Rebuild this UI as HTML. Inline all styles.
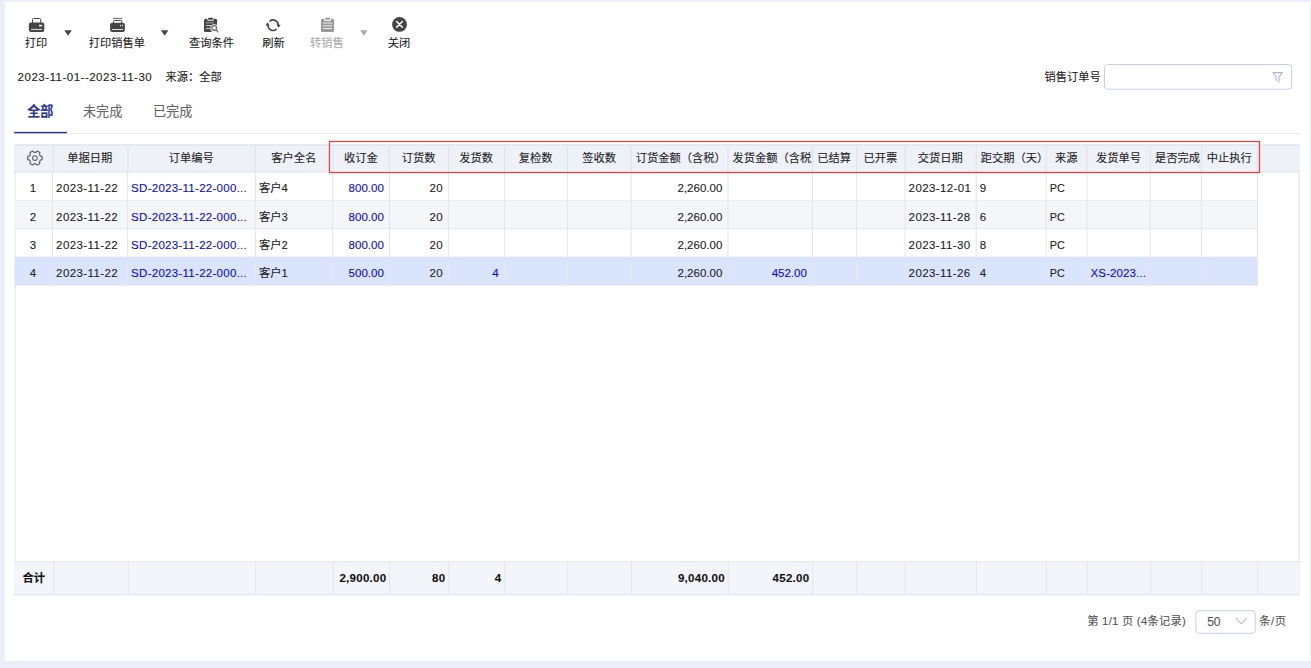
<!DOCTYPE html>
<html lang="zh-CN"><head><meta charset="utf-8"><title>销售订单执行情况</title>
<style>
html,body{margin:0;padding:0;}
body{width:1311px;height:668px;overflow:hidden;background:#eceef8;position:relative;font-family:"Liberation Sans","Noto Sans CJK SC",sans-serif;font-size:11.25px;color:#222;-webkit-text-stroke:0.1px currentColor;}
.panel{position:absolute;left:5px;top:2px;width:1304.5px;height:659px;background:#fff;}
.a{position:absolute;white-space:nowrap;line-height:14px;}
.tb{position:absolute;top:35.5px;height:14px;line-height:14px;text-align:center;white-space:nowrap;color:#222;transform:translateX(-50%);}
.tb.dis{color:#aaa;}
.ico{position:absolute;overflow:visible;}
.tri{position:absolute;top:29.9px;width:7.2px;height:5.8px;}
.tab{position:absolute;top:102.9px;height:18px;line-height:18px;font-size:13.1px;color:#666;white-space:nowrap;}
.tab.on{color:#2a3990;font-weight:bold;}
.cell{position:absolute;white-space:nowrap;overflow:hidden;box-sizing:border-box;}
.hc{text-align:center;padding:0 4.6px;color:#222;}
.hc.ov{text-align:left;}
.bc{padding:0 3.6px;}
.bc.r{text-align:right;padding-right:5.2px;}
.bc.c{text-align:center;}
.bc.l{text-align:left;}
.lat{font-size:11.5px;letter-spacing:0.28px;}
.blue{color:#0808f2;}
.fc{font-weight:bold;text-align:right;padding:0 3.4px;color:#111;}
.vl{position:absolute;width:1px;background:#e6e6e8;}
</style></head><body>

<svg style="position:absolute;left:0;top:0" width="1311" height="668" viewBox="0 0 1311 668">
<rect x="4.8" y="1.9" width="1305.4" height="659.1" fill="#fff"/>
<rect x="14.2" y="133.05" width="1285.5" height="0.9" fill="#e4e8f1"/>
<rect x="14.2" y="131.85" width="52.8" height="1.45" fill="#2a3990"/>
<rect x="14.4" y="144.3" width="1.3" height="450.90000000000003" fill="#e6eaf3"/>
<rect x="1298.5" y="144.3" width="1.2" height="450.90000000000003" fill="#e1e6f0"/>
<rect x="14.4" y="144.3" width="1285.3" height="28.19999999999999" fill="#eef1f8"/>
<rect x="14.4" y="144.3" width="1285.3" height="1.7" fill="#e2e7f0"/>
<rect x="14.4" y="171.2" width="1285.3" height="1.3" fill="#e3e8f1"/>
<rect x="15.700000000000001" y="200.10" width="1242.30" height="1" fill="#e9e9ea"/>
<rect x="14.8" y="200.70" width="1242.70" height="28.2" fill="#f5f6fa"/>
<rect x="15.700000000000001" y="228.30" width="1242.30" height="1" fill="#e9e9ea"/>
<rect x="15.700000000000001" y="256.50" width="1242.30" height="1" fill="#e9e9ea"/>
<rect x="14.8" y="257.10" width="1242.70" height="28.2" fill="#dae4fd"/>
<rect x="15.700000000000001" y="284.70" width="1242.30" height="1" fill="#e9e9ea"/>
<rect x="14.4" y="561.2" width="1285.3" height="34.0" fill="#f4f5fa"/>
<rect x="14.4" y="561.2" width="1285.3" height="1.1" fill="#e1e6f0"/>
<rect x="14.4" y="593.8000000000001" width="1285.3" height="1.4" fill="#e1e6f0"/>
<rect x="52.80" y="146.0" width="1.2" height="26.50" fill="#dfe5ee"/>
<rect x="51.95" y="172.5" width="1.1" height="112.80" fill="#e6e6e7"/>
<rect x="53.10" y="562.3000000000001" width="1.1" height="31.50" fill="#e4e6ec"/>
<rect x="127.40" y="146.0" width="1.2" height="26.50" fill="#dfe5ee"/>
<rect x="126.95" y="172.5" width="1.1" height="112.80" fill="#e6e6e7"/>
<rect x="127.70" y="562.3000000000001" width="1.1" height="31.50" fill="#e4e6ec"/>
<rect x="254.80" y="146.0" width="1.2" height="26.50" fill="#dfe5ee"/>
<rect x="254.85" y="172.5" width="1.1" height="112.80" fill="#e6e6e7"/>
<rect x="255.10" y="562.3000000000001" width="1.1" height="31.50" fill="#e4e6ec"/>
<rect x="332.60" y="146.0" width="1.2" height="26.50" fill="#dfe5ee"/>
<rect x="332.05" y="172.5" width="1.1" height="112.80" fill="#e6e6e7"/>
<rect x="332.90" y="562.3000000000001" width="1.1" height="31.50" fill="#e4e6ec"/>
<rect x="388.90" y="146.0" width="1.2" height="26.50" fill="#dfe5ee"/>
<rect x="388.95" y="172.5" width="1.1" height="112.80" fill="#e6e6e7"/>
<rect x="389.20" y="562.3000000000001" width="1.1" height="31.50" fill="#e4e6ec"/>
<rect x="447.90" y="146.0" width="1.2" height="26.50" fill="#dfe5ee"/>
<rect x="447.95" y="172.5" width="1.1" height="112.80" fill="#e6e6e7"/>
<rect x="448.20" y="562.3000000000001" width="1.1" height="31.50" fill="#e4e6ec"/>
<rect x="503.90" y="146.0" width="1.2" height="26.50" fill="#dfe5ee"/>
<rect x="503.95" y="172.5" width="1.1" height="112.80" fill="#e6e6e7"/>
<rect x="504.20" y="562.3000000000001" width="1.1" height="31.50" fill="#e4e6ec"/>
<rect x="566.90" y="146.0" width="1.2" height="26.50" fill="#dfe5ee"/>
<rect x="566.95" y="172.5" width="1.1" height="112.80" fill="#e6e6e7"/>
<rect x="567.20" y="562.3000000000001" width="1.1" height="31.50" fill="#e4e6ec"/>
<rect x="630.60" y="146.0" width="1.2" height="26.50" fill="#dfe5ee"/>
<rect x="630.65" y="172.5" width="1.1" height="112.80" fill="#e6e6e7"/>
<rect x="630.90" y="562.3000000000001" width="1.1" height="31.50" fill="#e4e6ec"/>
<rect x="727.40" y="146.0" width="1.2" height="26.50" fill="#dfe5ee"/>
<rect x="727.45" y="172.5" width="1.1" height="112.80" fill="#e6e6e7"/>
<rect x="727.70" y="562.3000000000001" width="1.1" height="31.50" fill="#e4e6ec"/>
<rect x="811.90" y="146.0" width="1.2" height="26.50" fill="#dfe5ee"/>
<rect x="811.95" y="172.5" width="1.1" height="112.80" fill="#e6e6e7"/>
<rect x="812.20" y="562.3000000000001" width="1.1" height="31.50" fill="#e4e6ec"/>
<rect x="855.90" y="146.0" width="1.2" height="26.50" fill="#dfe5ee"/>
<rect x="855.95" y="172.5" width="1.1" height="112.80" fill="#e6e6e7"/>
<rect x="856.20" y="562.3000000000001" width="1.1" height="31.50" fill="#e4e6ec"/>
<rect x="904.40" y="146.0" width="1.2" height="26.50" fill="#dfe5ee"/>
<rect x="904.45" y="172.5" width="1.1" height="112.80" fill="#e6e6e7"/>
<rect x="904.70" y="562.3000000000001" width="1.1" height="31.50" fill="#e4e6ec"/>
<rect x="975.60" y="146.0" width="1.2" height="26.50" fill="#dfe5ee"/>
<rect x="975.65" y="172.5" width="1.1" height="112.80" fill="#e6e6e7"/>
<rect x="975.90" y="562.3000000000001" width="1.1" height="31.50" fill="#e4e6ec"/>
<rect x="1045.60" y="146.0" width="1.2" height="26.50" fill="#dfe5ee"/>
<rect x="1045.65" y="172.5" width="1.1" height="112.80" fill="#e6e6e7"/>
<rect x="1045.90" y="562.3000000000001" width="1.1" height="31.50" fill="#e4e6ec"/>
<rect x="1086.40" y="146.0" width="1.2" height="26.50" fill="#dfe5ee"/>
<rect x="1086.45" y="172.5" width="1.1" height="112.80" fill="#e6e6e7"/>
<rect x="1086.70" y="562.3000000000001" width="1.1" height="31.50" fill="#e4e6ec"/>
<rect x="1149.70" y="146.0" width="1.2" height="26.50" fill="#dfe5ee"/>
<rect x="1149.75" y="172.5" width="1.1" height="112.80" fill="#e6e6e7"/>
<rect x="1150.00" y="562.3000000000001" width="1.1" height="31.50" fill="#e4e6ec"/>
<rect x="1200.90" y="146.0" width="1.2" height="26.50" fill="#dfe5ee"/>
<rect x="1200.95" y="172.5" width="1.1" height="112.80" fill="#e6e6e7"/>
<rect x="1201.20" y="562.3000000000001" width="1.1" height="31.50" fill="#e4e6ec"/>
<rect x="1256.90" y="146.0" width="1.2" height="26.50" fill="#dfe5ee"/>
<rect x="1256.95" y="172.5" width="1.1" height="112.80" fill="#e6e6e7"/>
<rect x="1257.20" y="562.3000000000001" width="1.1" height="31.50" fill="#e4e6ec"/>
<rect x="329.5" y="141.5" width="930" height="31" fill="none" stroke="#ff3434" stroke-width="1.2"/>
<rect x="1104.5" y="64.5" width="187.1" height="24.7" rx="3.2" fill="#fff" stroke="#c8cfe4" stroke-width="1"/>
<rect x="1195.9" y="610.7" width="59.3" height="22.6" rx="3.2" fill="#fff" stroke="#c8cfe4" stroke-width="1"/>
<g transform="translate(64.3,29.95)"><path d="M0 0.3 H7.5 L3.75 5.8z" fill="#444"/></g>
<g transform="translate(160.9,29.95)"><path d="M0 0.3 H7.5 L3.75 5.8z" fill="#444"/></g>
<g transform="translate(360.1,29.95)"><path d="M0 0.3 H7.5 L3.75 5.8z" fill="#aaa"/></g>
<g transform="translate(28.9,18.0)"><rect x="3.6" y="0.5" width="8.2" height="6" rx="1" fill="#fff" stroke="#444" stroke-width="1"/><rect x="0" y="4.6" width="15.4" height="9.4" rx="2" fill="#444"/><rect x="10.1" y="6.7" width="3.2" height="1.8" rx="0.4" fill="#f2f2f2"/><rect x="2.1" y="10.9" width="11.2" height="0.9" fill="#f2f2f2"/></g>
<g transform="translate(110.1,17.8)"><rect x="2.8" y="0.1" width="9.2" height="0.9" fill="#555"/><rect x="3.4" y="2.7" width="8.2" height="5" rx="0.8" fill="#fff" stroke="#444" stroke-width="1"/><rect x="0" y="5" width="14.8" height="9.2" rx="2" fill="#444"/><rect x="9.9" y="6.7" width="1.1" height="1.9" rx="0.4" fill="#ccc"/><rect x="11.9" y="6.7" width="1.1" height="1.9" rx="0.4" fill="#ccc"/><rect x="1.8" y="11.3" width="11.2" height="0.9" fill="#f2f2f2"/></g>
<g transform="translate(204.0,17.8)"><rect x="0" y="0.95" width="13.1" height="13.25" rx="1.6" fill="#444"/><path d="M3.3 0.4 h6.6 v1.1 a1.5 1.5 0 0 1 -1.5 1.5 h-3.6 a1.5 1.5 0 0 1 -1.5 -1.5z" fill="#fff"/><rect x="4" y="0" width="5.3" height="1.9" rx="0.9" fill="#444"/><rect x="1.9" y="4.6" width="8" height="0.9" fill="#b5b5b5"/><rect x="1.9" y="7.3" width="5.4" height="0.9" fill="#e0e0e0"/><rect x="1.9" y="10.1" width="4.4" height="0.9" fill="#e0e0e0"/><circle cx="10.3" cy="10.4" r="3.9" fill="#fff"/><path d="M9 9 L14.4 14.4 L8 14.4z" fill="#fff"/><rect x="10" y="10" width="4.4" height="4.4" fill="#fff"/><circle cx="10.2" cy="10.3" r="2.4" fill="#fff" stroke="#6e6e6e" stroke-width="1.3"/><path d="M12 12.1 L13.9 13.9" stroke="#6e6e6e" stroke-width="1.3" stroke-linecap="round"/></g>
<g transform="translate(265.0,17.0)"><g fill="none" stroke="#444" stroke-width="1.6" stroke-linecap="round"><path d="M5.0 4.0 A5.15 5.15 0 0 1 13.25 7.9"/><path d="M11.2 12.4 A5.15 5.15 0 0 1 2.95 8.5"/></g><path d="M11.3 7.5 L15.7 7.8 L13.6 10.8z" fill="#444"/><path d="M0.5 8.6 L4.7 8.4 L2.5 5.2z" fill="#444"/></g>
<g transform="translate(321.0,17.8)"><rect x="0" y="0.95" width="13.1" height="13.25" rx="1.6" fill="#999"/><path d="M3 0.4 h7.1 v1.2 a1.6 1.6 0 0 1 -1.6 1.6 h-3.9 a1.6 1.6 0 0 1 -1.6 -1.6z" fill="#fff"/><rect x="3.9" y="0" width="5.3" height="1.9" rx="0.9" fill="#999"/><rect x="1.9" y="4.7" width="9.4" height="1.1" fill="#e6e6e6"/><rect x="1.9" y="7.5" width="9.4" height="1.1" fill="#e6e6e6"/><rect x="1.9" y="10.2" width="9.4" height="1.1" fill="#e6e6e6"/></g>
<g transform="translate(392.0,16.9)"><circle cx="7.5" cy="7.5" r="7.4" fill="#444"/><path d="M4.6 4.6 L10.4 10.4 M10.4 4.6 L4.6 10.4" stroke="#fff" stroke-width="1.5" stroke-linecap="round"/></g>
<g transform="translate(1271.0,71.0)"><path d="M2 1.6 H11.2 M2.2 2 L5.2 6.2 V9.8 M11 2 L7.9 6.2 V11.6" fill="none" stroke="#a9b3cf" stroke-width="1.1" stroke-linecap="round" stroke-linejoin="round"/></g>
<g transform="translate(34.93,158.05)"><path d="M7.25 0.00 L7.25 0.13 L7.25 0.25 L7.24 0.38 L7.23 0.51 L7.22 0.63 L7.21 0.76 L7.20 0.88 L7.18 1.01 L7.16 1.13 L7.14 1.26 L7.12 1.38 L7.09 1.51 L7.02 1.62 L6.80 1.69 L6.58 1.76 L6.35 1.82 L6.14 1.88 L5.92 1.92 L5.71 1.97 L5.51 2.01 L5.41 2.08 L5.38 2.17 L5.34 2.27 L5.30 2.36 L5.26 2.45 L5.21 2.54 L5.17 2.63 L5.12 2.72 L5.07 2.81 L5.02 2.90 L4.97 2.99 L4.92 3.07 L4.86 3.16 L4.81 3.24 L4.75 3.33 L4.69 3.41 L4.63 3.49 L4.57 3.57 L4.51 3.65 L4.49 3.77 L4.56 3.96 L4.63 4.17 L4.69 4.38 L4.76 4.59 L4.81 4.81 L4.87 5.04 L4.91 5.27 L4.85 5.39 L4.76 5.47 L4.66 5.55 L4.56 5.63 L4.46 5.71 L4.36 5.79 L4.26 5.87 L4.16 5.94 L4.05 6.01 L3.95 6.08 L3.84 6.15 L3.73 6.21 L3.63 6.28 L3.51 6.34 L3.40 6.40 L3.29 6.46 L3.18 6.52 L3.06 6.57 L2.95 6.62 L2.83 6.67 L2.72 6.72 L2.60 6.77 L2.48 6.81 L2.36 6.86 L2.24 6.90 L2.10 6.89 L1.93 6.73 L1.76 6.58 L1.60 6.41 L1.44 6.25 L1.29 6.09 L1.15 5.93 L1.02 5.78 L0.91 5.73 L0.81 5.74 L0.71 5.76 L0.61 5.77 L0.51 5.78 L0.40 5.79 L0.30 5.79 L0.20 5.80 L0.10 5.80 L0.00 5.80 L-0.10 5.80 L-0.20 5.80 L-0.30 5.79 L-0.40 5.79 L-0.51 5.78 L-0.61 5.77 L-0.71 5.76 L-0.81 5.74 L-0.91 5.73 L-1.02 5.78 L-1.15 5.93 L-1.29 6.09 L-1.44 6.25 L-1.60 6.41 L-1.76 6.58 L-1.93 6.73 L-2.10 6.89 L-2.24 6.90 L-2.36 6.86 L-2.48 6.81 L-2.60 6.77 L-2.72 6.72 L-2.83 6.67 L-2.95 6.62 L-3.06 6.57 L-3.18 6.52 L-3.29 6.46 L-3.40 6.40 L-3.51 6.34 L-3.62 6.28 L-3.73 6.21 L-3.84 6.15 L-3.95 6.08 L-4.05 6.01 L-4.16 5.94 L-4.26 5.87 L-4.36 5.79 L-4.46 5.71 L-4.56 5.63 L-4.66 5.55 L-4.76 5.47 L-4.85 5.39 L-4.91 5.27 L-4.87 5.04 L-4.81 4.81 L-4.76 4.59 L-4.69 4.38 L-4.63 4.17 L-4.56 3.96 L-4.49 3.77 L-4.51 3.65 L-4.57 3.57 L-4.63 3.49 L-4.69 3.41 L-4.75 3.33 L-4.81 3.24 L-4.86 3.16 L-4.92 3.07 L-4.97 2.99 L-5.02 2.90 L-5.07 2.81 L-5.12 2.72 L-5.17 2.63 L-5.21 2.54 L-5.26 2.45 L-5.30 2.36 L-5.34 2.27 L-5.38 2.17 L-5.41 2.08 L-5.51 2.01 L-5.71 1.97 L-5.92 1.92 L-6.14 1.88 L-6.35 1.82 L-6.58 1.76 L-6.80 1.69 L-7.02 1.62 L-7.09 1.51 L-7.12 1.38 L-7.14 1.26 L-7.16 1.13 L-7.18 1.01 L-7.20 0.88 L-7.21 0.76 L-7.22 0.63 L-7.23 0.51 L-7.24 0.38 L-7.25 0.25 L-7.25 0.13 L-7.25 0.00 L-7.25 -0.13 L-7.25 -0.25 L-7.24 -0.38 L-7.23 -0.51 L-7.22 -0.63 L-7.21 -0.76 L-7.20 -0.88 L-7.18 -1.01 L-7.16 -1.13 L-7.14 -1.26 L-7.12 -1.38 L-7.09 -1.51 L-7.02 -1.62 L-6.80 -1.69 L-6.58 -1.76 L-6.35 -1.82 L-6.14 -1.88 L-5.92 -1.92 L-5.71 -1.97 L-5.51 -2.01 L-5.41 -2.08 L-5.38 -2.17 L-5.34 -2.27 L-5.30 -2.36 L-5.26 -2.45 L-5.21 -2.54 L-5.17 -2.63 L-5.12 -2.72 L-5.07 -2.81 L-5.02 -2.90 L-4.97 -2.99 L-4.92 -3.07 L-4.86 -3.16 L-4.81 -3.24 L-4.75 -3.33 L-4.69 -3.41 L-4.63 -3.49 L-4.57 -3.57 L-4.51 -3.65 L-4.49 -3.77 L-4.56 -3.96 L-4.63 -4.17 L-4.69 -4.38 L-4.76 -4.59 L-4.81 -4.81 L-4.87 -5.04 L-4.91 -5.27 L-4.85 -5.39 L-4.76 -5.47 L-4.66 -5.55 L-4.56 -5.63 L-4.46 -5.71 L-4.36 -5.79 L-4.26 -5.87 L-4.16 -5.94 L-4.05 -6.01 L-3.95 -6.08 L-3.84 -6.15 L-3.73 -6.21 L-3.63 -6.28 L-3.51 -6.34 L-3.40 -6.40 L-3.29 -6.46 L-3.18 -6.52 L-3.06 -6.57 L-2.95 -6.62 L-2.83 -6.67 L-2.72 -6.72 L-2.60 -6.77 L-2.48 -6.81 L-2.36 -6.86 L-2.24 -6.90 L-2.10 -6.89 L-1.93 -6.73 L-1.76 -6.58 L-1.60 -6.41 L-1.44 -6.25 L-1.29 -6.09 L-1.15 -5.93 L-1.02 -5.78 L-0.91 -5.73 L-0.81 -5.74 L-0.71 -5.76 L-0.61 -5.77 L-0.51 -5.78 L-0.40 -5.79 L-0.30 -5.79 L-0.20 -5.80 L-0.10 -5.80 L-0.00 -5.80 L0.10 -5.80 L0.20 -5.80 L0.30 -5.79 L0.40 -5.79 L0.51 -5.78 L0.61 -5.77 L0.71 -5.76 L0.81 -5.74 L0.91 -5.73 L1.02 -5.78 L1.15 -5.93 L1.29 -6.09 L1.44 -6.25 L1.60 -6.41 L1.76 -6.58 L1.93 -6.73 L2.10 -6.89 L2.24 -6.90 L2.36 -6.86 L2.48 -6.81 L2.60 -6.77 L2.72 -6.72 L2.83 -6.67 L2.95 -6.62 L3.06 -6.57 L3.18 -6.52 L3.29 -6.46 L3.40 -6.40 L3.51 -6.34 L3.63 -6.28 L3.73 -6.21 L3.84 -6.15 L3.95 -6.08 L4.05 -6.01 L4.16 -5.94 L4.26 -5.87 L4.36 -5.79 L4.46 -5.71 L4.56 -5.63 L4.66 -5.55 L4.76 -5.47 L4.85 -5.39 L4.91 -5.27 L4.87 -5.04 L4.81 -4.81 L4.76 -4.59 L4.69 -4.38 L4.63 -4.17 L4.56 -3.96 L4.49 -3.77 L4.51 -3.65 L4.57 -3.57 L4.63 -3.49 L4.69 -3.41 L4.75 -3.33 L4.81 -3.24 L4.86 -3.16 L4.92 -3.07 L4.97 -2.99 L5.02 -2.90 L5.07 -2.81 L5.12 -2.72 L5.17 -2.63 L5.21 -2.54 L5.26 -2.45 L5.30 -2.36 L5.34 -2.27 L5.38 -2.17 L5.41 -2.08 L5.51 -2.01 L5.71 -1.97 L5.92 -1.92 L6.14 -1.88 L6.35 -1.82 L6.58 -1.76 L6.80 -1.69 L7.02 -1.62 L7.09 -1.51 L7.12 -1.38 L7.14 -1.26 L7.16 -1.13 L7.18 -1.01 L7.20 -0.88 L7.21 -0.76 L7.22 -0.63 L7.23 -0.51 L7.24 -0.38 L7.25 -0.25 L7.25 -0.13 L7.25 -0.00 Z" fill="none" stroke="#666" stroke-width="1.25" stroke-linejoin="round"/><circle cx="0" cy="0" r="2.3" fill="none" stroke="#666" stroke-width="1.2"/></g>
<g transform="translate(1235.0,617.0)"><path d="M1.2 1.4 L6.3 7 L11.4 1.4" fill="none" stroke="#b9bcc6" stroke-width="1.1" stroke-linecap="round" stroke-linejoin="round"/></g>
</svg>
<!-- toolbar -->
<div class="tb" style="left:36.1px">打印</div>
<div class="tb" style="left:116.8px">打印销售单</div>
<div class="tb" style="left:211.6px">查询条件</div>
<div class="tb" style="left:273.5px">刷新</div>
<div class="tb dis" style="left:327px">转销售</div>
<div class="tb" style="left:399px">关闭</div>

<div class="a" style="left:17.6px;top:70.4px;font-size:11.5px;letter-spacing:0.5px">2023-11-01--2023-11-30</div>
<div class="a" style="left:165.4px;top:70.4px">来源：全部</div>
<div class="a" style="left:1044.4px;top:70.2px">销售订单号</div>

<div class="tab on" style="left:27.2px">全部</div>
<div class="tab" style="left:83px">未完成</div>
<div class="tab" style="left:153px">已完成</div>

<div class="cell hc" style="left:52.5px;top:145.3px;width:74.5px;height:27.1px;line-height:27.6px">单据日期</div>
<div class="cell hc" style="left:127.5px;top:145.3px;width:127.4px;height:27.1px;line-height:27.6px">订单编号</div>
<div class="cell hc" style="left:255.4px;top:145.3px;width:76.7px;height:27.1px;line-height:27.6px">客户全名</div>
<div class="cell hc" style="left:332.6px;top:145.3px;width:56.4px;height:27.1px;line-height:27.6px">收订金</div>
<div class="cell hc" style="left:389.5px;top:145.3px;width:58.5px;height:27.1px;line-height:27.6px">订货数</div>
<div class="cell hc" style="left:448.5px;top:145.3px;width:55.5px;height:27.1px;line-height:27.6px">发货数</div>
<div class="cell hc" style="left:504.5px;top:145.3px;width:62.5px;height:27.1px;line-height:27.6px">复检数</div>
<div class="cell hc" style="left:567.5px;top:145.3px;width:63.2px;height:27.1px;line-height:27.6px">签收数</div>
<div class="cell hc" style="left:631.2px;top:145.3px;width:96.3px;height:27.1px;line-height:27.6px">订货金额（含税）</div>
<div class="cell hc ov" style="left:728px;top:145.3px;width:84.0px;height:27.1px;line-height:27.6px">发货金额（含税）</div>
<div class="cell hc" style="left:812.5px;top:145.3px;width:43.5px;height:27.1px;line-height:27.6px">已结算</div>
<div class="cell hc" style="left:856.5px;top:145.3px;width:48.0px;height:27.1px;line-height:27.6px">已开票</div>
<div class="cell hc" style="left:905px;top:145.3px;width:70.7px;height:27.1px;line-height:27.6px">交货日期</div>
<div class="cell hc ov" style="left:976.2px;top:145.3px;width:69.5px;height:27.1px;line-height:27.6px">距交期（天）</div>
<div class="cell hc" style="left:1046.2px;top:145.3px;width:40.3px;height:27.1px;line-height:27.6px">来源</div>
<div class="cell hc" style="left:1087px;top:145.3px;width:62.8px;height:27.1px;line-height:27.6px">发货单号</div>
<div class="cell hc" style="left:1150.3px;top:145.3px;width:50.7px;height:27.1px;line-height:27.6px">是否完成</div>
<div class="cell hc" style="left:1201.5px;top:145.3px;width:55.5px;height:27.1px;line-height:27.6px">中止执行</div>

<div class="cell bc c lat" style="left:14.4px;top:172.4px;width:37.6px;height:28.2px;line-height:32.4px">1</div>
<div class="cell bc l lat" style="letter-spacing:0.4px;left:52.5px;top:172.4px;width:74.5px;height:28.2px;line-height:32.4px">2023-11-22</div>
<div class="cell bc l blue lat" style="left:127.5px;top:172.4px;width:127.4px;height:28.2px;line-height:32.4px">SD-2023-11-22-000...</div>
<div class="cell bc l" style="left:255.4px;top:172.4px;width:76.7px;height:28.2px;line-height:32.4px">客户4</div>
<div class="cell bc r blue lat" style="letter-spacing:0;left:332.6px;top:172.4px;width:56.4px;height:28.2px;line-height:32.4px">800.00</div>
<div class="cell bc r lat" style="left:389.5px;top:172.4px;width:58.5px;height:28.2px;line-height:32.4px">20</div>
<div class="cell bc r lat" style="letter-spacing:0;left:631.2px;top:172.4px;width:96.3px;height:28.2px;line-height:32.4px">2,260.00</div>
<div class="cell bc l lat" style="letter-spacing:0.4px;left:905px;top:172.4px;width:70.7px;height:28.2px;line-height:32.4px">2023-12-01</div>
<div class="cell bc l lat" style="left:976.2px;top:172.4px;width:69.5px;height:28.2px;line-height:32.4px">9</div>
<div class="cell bc l lat" style="letter-spacing:0;font-size:10.8px;left:1046.2px;top:172.4px;width:40.3px;height:28.2px;line-height:32.4px">PC</div>
<div class="cell bc c lat" style="left:14.4px;top:200.6px;width:37.6px;height:28.2px;line-height:32.4px">2</div>
<div class="cell bc l lat" style="letter-spacing:0.4px;left:52.5px;top:200.6px;width:74.5px;height:28.2px;line-height:32.4px">2023-11-22</div>
<div class="cell bc l blue lat" style="left:127.5px;top:200.6px;width:127.4px;height:28.2px;line-height:32.4px">SD-2023-11-22-000...</div>
<div class="cell bc l" style="left:255.4px;top:200.6px;width:76.7px;height:28.2px;line-height:32.4px">客户3</div>
<div class="cell bc r blue lat" style="letter-spacing:0;left:332.6px;top:200.6px;width:56.4px;height:28.2px;line-height:32.4px">800.00</div>
<div class="cell bc r lat" style="left:389.5px;top:200.6px;width:58.5px;height:28.2px;line-height:32.4px">20</div>
<div class="cell bc r lat" style="letter-spacing:0;left:631.2px;top:200.6px;width:96.3px;height:28.2px;line-height:32.4px">2,260.00</div>
<div class="cell bc l lat" style="letter-spacing:0.4px;left:905px;top:200.6px;width:70.7px;height:28.2px;line-height:32.4px">2023-11-28</div>
<div class="cell bc l lat" style="left:976.2px;top:200.6px;width:69.5px;height:28.2px;line-height:32.4px">6</div>
<div class="cell bc l lat" style="letter-spacing:0;font-size:10.8px;left:1046.2px;top:200.6px;width:40.3px;height:28.2px;line-height:32.4px">PC</div>
<div class="cell bc c lat" style="left:14.4px;top:228.8px;width:37.6px;height:28.2px;line-height:32.4px">3</div>
<div class="cell bc l lat" style="letter-spacing:0.4px;left:52.5px;top:228.8px;width:74.5px;height:28.2px;line-height:32.4px">2023-11-22</div>
<div class="cell bc l blue lat" style="left:127.5px;top:228.8px;width:127.4px;height:28.2px;line-height:32.4px">SD-2023-11-22-000...</div>
<div class="cell bc l" style="left:255.4px;top:228.8px;width:76.7px;height:28.2px;line-height:32.4px">客户2</div>
<div class="cell bc r blue lat" style="letter-spacing:0;left:332.6px;top:228.8px;width:56.4px;height:28.2px;line-height:32.4px">800.00</div>
<div class="cell bc r lat" style="left:389.5px;top:228.8px;width:58.5px;height:28.2px;line-height:32.4px">20</div>
<div class="cell bc r lat" style="letter-spacing:0;left:631.2px;top:228.8px;width:96.3px;height:28.2px;line-height:32.4px">2,260.00</div>
<div class="cell bc l lat" style="letter-spacing:0.4px;left:905px;top:228.8px;width:70.7px;height:28.2px;line-height:32.4px">2023-11-30</div>
<div class="cell bc l lat" style="left:976.2px;top:228.8px;width:69.5px;height:28.2px;line-height:32.4px">8</div>
<div class="cell bc l lat" style="letter-spacing:0;font-size:10.8px;left:1046.2px;top:228.8px;width:40.3px;height:28.2px;line-height:32.4px">PC</div>
<div class="cell bc c lat" style="left:14.4px;top:257.0px;width:37.6px;height:28.2px;line-height:32.4px">4</div>
<div class="cell bc l lat" style="letter-spacing:0.4px;left:52.5px;top:257.0px;width:74.5px;height:28.2px;line-height:32.4px">2023-11-22</div>
<div class="cell bc l blue lat" style="left:127.5px;top:257.0px;width:127.4px;height:28.2px;line-height:32.4px">SD-2023-11-22-000...</div>
<div class="cell bc l" style="left:255.4px;top:257.0px;width:76.7px;height:28.2px;line-height:32.4px">客户1</div>
<div class="cell bc r blue lat" style="letter-spacing:0;left:332.6px;top:257.0px;width:56.4px;height:28.2px;line-height:32.4px">500.00</div>
<div class="cell bc r lat" style="left:389.5px;top:257.0px;width:58.5px;height:28.2px;line-height:32.4px">20</div>
<div class="cell bc r blue lat" style="left:448.5px;top:257.0px;width:55.5px;height:28.2px;line-height:32.4px">4</div>
<div class="cell bc r lat" style="letter-spacing:0;left:631.2px;top:257.0px;width:96.3px;height:28.2px;line-height:32.4px">2,260.00</div>
<div class="cell bc r blue lat" style="letter-spacing:0;left:728px;top:257.0px;width:84.0px;height:28.2px;line-height:32.4px">452.00</div>
<div class="cell bc l lat" style="letter-spacing:0.4px;left:905px;top:257.0px;width:70.7px;height:28.2px;line-height:32.4px">2023-11-26</div>
<div class="cell bc l lat" style="left:976.2px;top:257.0px;width:69.5px;height:28.2px;line-height:32.4px">4</div>
<div class="cell bc l lat" style="letter-spacing:0;font-size:10.8px;left:1046.2px;top:257.0px;width:40.3px;height:28.2px;line-height:32.4px">PC</div>
<div class="cell bc l blue lat" style="letter-spacing:0.1px;left:1087px;top:257.0px;width:62.8px;height:28.2px;line-height:32.4px">XS-2023...</div>
<div class="cell fc" style="left:14.4px;top:561.2px;width:38.4px;height:34.0px;line-height:35.5px;text-align:left;padding-left:8.2px;">合计</div>
<div class="cell fc lat" style="left:332.6px;top:561.2px;width:57.2px;height:34.0px;line-height:35.5px;">2,900.00</div>
<div class="cell fc lat" style="left:389.5px;top:561.2px;width:59.3px;height:34.0px;line-height:35.5px;">80</div>
<div class="cell fc lat" style="left:448.5px;top:561.2px;width:56.3px;height:34.0px;line-height:35.5px;">4</div>
<div class="cell fc lat" style="left:631.2px;top:561.2px;width:97.1px;height:34.0px;line-height:35.5px;">9,040.00</div>
<div class="cell fc lat" style="left:728px;top:561.2px;width:84.8px;height:34.0px;line-height:35.5px;">452.00</div>
<div class="a" style="left:1087.2px;top:614.3px;color:#555;letter-spacing:0.27px">第 1/1 页 (4条记录)</div>
<div class="a" style="left:1207.2px;top:614.6px;color:#555;font-size:12px">50</div>
<div class="a" style="left:1259.2px;top:614.3px;color:#555;letter-spacing:0.6px">条/页</div>

</body></html>
